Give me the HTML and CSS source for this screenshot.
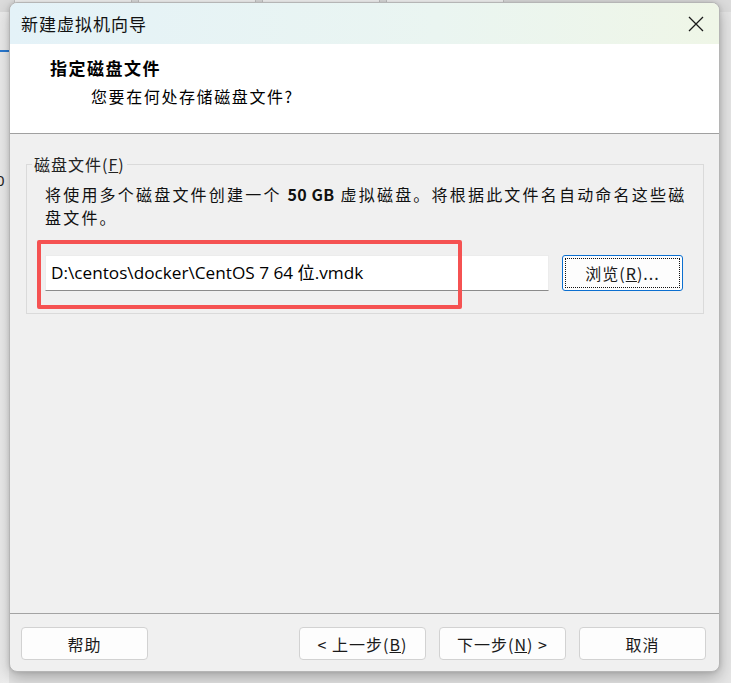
FILE: index.html
```html
<!DOCTYPE html>
<html lang="zh">
<head>
<meta charset="utf-8">
<title>新建虚拟机向导</title>
<link rel="stylesheet" href="styles.css">
</head>
<body>
<div class="desktop">
  <div class="appbar">
    <div class="apptab"></div>
    <div class="apptab"></div>
    <div class="apptab"></div>
    <div class="apptab"></div>
  </div>
  <div class="appmark"></div>
  <div class="appzero">0</div>

  <div class="dialog">
    <div class="titlebar">
      <span class="title">新建虚拟机向导</span>
      <svg class="close" width="16" height="16" viewBox="0 0 16 16"><path d="M1 1 L15 15 M15 1 L1 15" stroke="#1a1a1a" stroke-width="1.3" fill="none"/></svg>
    </div>
    <div class="header">
      <div class="h1">指定磁盘文件</div>
      <div class="h2">您要在何处存储磁盘文件?</div>
    </div>
    <div class="body">
      <fieldset class="group">
        <legend>磁盘文件(<u>F</u>)</legend>
        <p class="desc">将使用多个磁盘文件创建一个 <b>50 GB</b> 虚拟磁盘。将根据此文件名自动命名这些磁盘文件。</p>
        <div class="row">
          <div class="input">D:\centos\docker\CentOS 7 64 位.vmdk</div>
          <div class="btn browse"><span class="focus">浏览(<u>R</u>)...</span></div>
        </div>
        <div class="redbox"></div>
      </fieldset>
    </div>
    <div class="footer">
      <div class="btn">帮助</div>
      <div class="spacer"></div>
      <div class="btn">&lt; 上一步(<u>B</u>)</div>
      <div class="btn">下一步(<u>N</u>) &gt;</div>
      <div class="btn">取消</div>
    </div>
  </div>
</div>
</body>
</html>
```

FILE: styles.css
```css
* { box-sizing: border-box; }
html, body { margin: 0; padding: 0; }
body {
  width: 731px;
  height: 683px;
  overflow: hidden;
  background: #e9e9e9;
  font-family: "Noto Sans CJK SC", "Noto Sans", sans-serif;
  color: #000;
}
.desktop {
  position: relative;
  width: 731px;
  height: 683px;
  background: linear-gradient(to right, #ececec 0, #f2f2f2 9px, #e6e6e6 9px);
}
.appbar {
  position: absolute;
  left: 0; top: 0;
  width: 731px;
  height: 12px;
  background: #dcdcdc;
  display: flex;
  gap: 6px;
  padding-left: 14px;
}
.apptab {
  width: 118px;
  height: 12px;
  background: #f4f4f4;
  border: 1px solid #c4c4c4;
  border-top: none;
}
.appmark {
  position: absolute;
  left: 0; top: 50px;
  width: 9px; height: 2px;
  background: #2a7bd4;
}
.appzero {
  position: absolute;
  left: -4px; top: 170px;
  font: 15px "Noto Sans", sans-serif;
  color: #222;
}
.dialog {
  position: absolute;
  left: 9px; top: 2px;
  width: 711px;
  height: 670px;
  border: 1px solid #b5b5b5;
  border-radius: 8px;
  overflow: hidden;
  background: #f0f0f0;
  box-shadow: 0 6px 16px rgba(0,0,0,0.28), 0 0 4px rgba(0,0,0,0.12);
  display: flex;
  flex-direction: column;
}
.titlebar {
  height: 41px;
  flex: none;
  background: linear-gradient(to right, #e4f2f8, #eaf5f1 60%, #eff6e7);
  display: flex;
  align-items: center;
  justify-content: space-between;
  padding: 0 15px 0 11px;
}
.title {
  font-size: 17px;
  letter-spacing: 1px;
  color: #111;
}
.header {
  height: 90px;
  flex: none;
  background: #fff;
  border-bottom: 1px solid #a0a0a0;
  padding: 12px 0 0 40px;
}
.h1 {
  font-size: 17px;
  font-weight: bold;
  letter-spacing: 1.5px;
  line-height: 24px;
}
.h2 {
  font-size: 16px;
  letter-spacing: 1.6px;
  line-height: 24px;
  margin-top: 4px;
  padding-left: 41px;
}
.body {
  flex: 1;
  padding: 20px 15px 0 16px;
}
.group {
  position: relative;
  margin: 0;
  border: 1px solid #dadada;
  padding: 0 0 0 18px;
  height: 160px;
}
.group legend {
  padding: 0 2px;
  margin-left: -13px;
  font-size: 16px;
  letter-spacing: 1px;
  color: #222;
  line-height: 20px;
}
.desc {
  margin: 9px 0 0 0;
  font-size: 16px;
  line-height: 23px;
  letter-spacing: 2.2px;
  width: 650px;
  color: #111;
}
.desc b { letter-spacing: 0.5px; }
.row {
  display: flex;
  gap: 13px;
  margin-top: 26px;
  height: 36px;
}
.input {
  width: 504px;
  height: 36px;
  background: #fff;
  border: 1px solid #ececec;
  border-bottom: 1px solid #8b8b8b;
  padding: 0 5px;
  font-family: "Open Sans", "Noto Sans CJK SC", sans-serif;
  font-size: 17.2px;
  line-height: 33px;
  white-space: nowrap;
}
.btn {
  width: 127px;
  height: 33px;
  background: #fdfdfd;
  border: 1px solid #d2d2d2;
  border-radius: 4px;
  display: flex;
  align-items: center;
  justify-content: center;
  font-size: 16px;
  letter-spacing: 1px;
  color: #1a1a1a;
}
.btn.browse {
  width: 121px;
  height: 36px;
  border: 1px solid #0b6fd0;
  border-radius: 3px;
  padding: 2px;
  align-items: stretch;
  justify-content: stretch;
}
.focus {
  flex: 1;
  border: 1px dotted #111;
  display: flex;
  align-items: center;
  justify-content: center;
}
.redbox {
  position: absolute;
  left: 10px;
  top: 66px;
  width: 425px;
  height: 69px;
  border: 4px solid #f55252;
  border-radius: 2px;
}
.footer {
  height: 58px;
  flex: none;
  border-top: 1px solid #a3a3a3;
  display: flex;
  gap: 13px;
  padding: 13px 13px 0 11px;
}
.spacer { flex: 1; }
```
